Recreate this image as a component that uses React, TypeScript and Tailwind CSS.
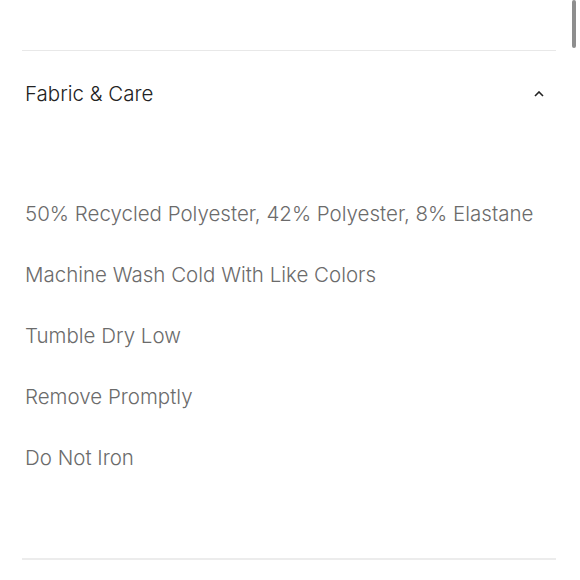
const items = [
  "50% Recycled Polyester, 42% Polyester, 8% Elastane",
  "Machine Wash Cold With Like Colors",
  "Tumble Dry Low",
  "Remove Promptly",
  "Do Not Iron",
];

export default function App() {
  return (
    <div className="relative w-[580px] h-[580px] bg-white overflow-hidden" style={{ fontFamily: "Inter, 'Helvetica Neue', Arial, sans-serif" }}>
      <div className="absolute right-[4px] top-0 w-[4px] h-[48px] rounded-full bg-[#8e8e8e]" />
      <div className="pl-[22px] pr-[24px] pt-[50px]">
        <div className="border-t border-[#e8e8e8]">
          <div className="flex items-center justify-between pl-[3px] pr-[12px] h-[86px]">
            <span className="text-[20.5px] font-light text-[#222]">Fabric &amp; Care</span>
            <svg width="10" height="6" viewBox="0 0 10 6" fill="none">
              <path d="M1 5 L5 1 L9 5" stroke="#222" strokeWidth="1.6" />
            </svg>
          </div>
          <ul className="pl-[3px] pt-[47px] pb-[69px] flex flex-col">
            {items.map((t) => (
              <li key={t} className="h-[61px] flex items-center text-[20.5px] font-light text-[#6b6b6b]">
                {t}
              </li>
            ))}
          </ul>
        </div>
        <div className="border-t-2 border-[#ececec]" />
      </div>
    </div>
  );
}
